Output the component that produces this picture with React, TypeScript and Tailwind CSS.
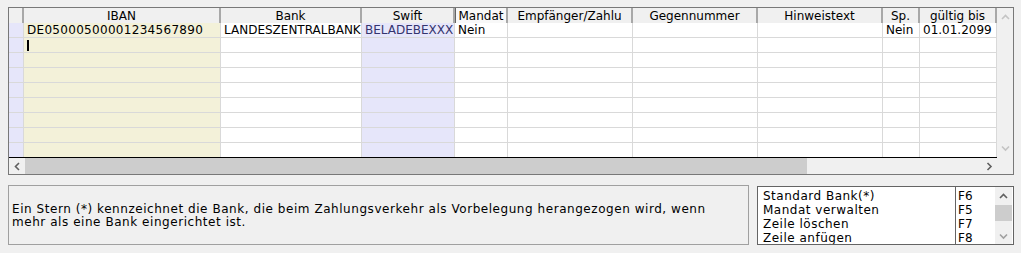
import React from 'react';

const cols = [
  { key: 'ind', label: '', w: 'w-[15px]', body: 'bg-[#e6e6fa]' },
  { key: 'iban', label: 'IBAN', w: 'w-[197px]', body: 'bg-[#f3f1d9]' },
  { key: 'bank', label: 'Bank', w: 'w-[141px]', body: 'bg-white' },
  { key: 'swift', label: 'Swift', w: 'w-[93px]', body: 'bg-[#e6e6fa]' },
  { key: 'mandat', label: 'Mandat', w: 'w-[53px]', body: 'bg-white' },
  { key: 'empf', label: 'Empfänger/Zahlu', w: 'w-[125px]', body: 'bg-white' },
  { key: 'gegen', label: 'Gegennummer', w: 'w-[125px]', body: 'bg-white' },
  { key: 'hinweis', label: 'Hinweistext', w: 'w-[125px]', body: 'bg-white' },
  { key: 'sp', label: 'Sp.', w: 'w-[37px]', body: 'bg-white' },
  { key: 'gueltig', label: 'gültig bis', w: 'w-[77px]', body: 'bg-white' },
];

const firstRow: Record<string, string> = {
  iban: 'DE05000500001234567890',
  bank: 'LANDESZENTRALBANK',
  swift: 'BELADEBEXXX',
  mandat: 'Nein',
  sp: 'Nein',
  gueltig: '01.01.2099',
};

const menu = [
  ['Standard Bank(*)', 'F6'],
  ['Mandat verwalten', 'F5'],
  ['Zeile löschen', 'F7'],
  ['Zeile anfügen', 'F8'],
];

function Chevron({ dir, color }: { dir: 'up' | 'down' | 'left' | 'right'; color: string }) {
  const d = {
    up: 'M1 5 L4.5 1.5 L8 5',
    down: 'M1 1.5 L4.5 5 L8 1.5',
    left: 'M5 1 L1.5 4.5 L5 8',
    right: 'M1.5 1 L5 4.5 L1.5 8',
  }[dir];
  const vertical = dir === 'up' || dir === 'down';
  return (
    <svg width={vertical ? 9 : 7} height={vertical ? 7 : 9} viewBox={vertical ? '0 0 9 7' : '0 0 7 9'}>
      <path d={d} fill="none" stroke={color} strokeWidth="1.6" />
    </svg>
  );
}

export default function App() {
  const rows = Array.from({ length: 9 }, (_, i) => i);
  return (
    <div
      className="w-[1021px] h-[253px] bg-[#f0f0f0] pt-[7px] pl-[8px] text-black overflow-hidden"
      style={{ fontFamily: '"DejaVu Sans", Verdana, sans-serif' }}
    >
      {/* grid */}
      <div className="w-[1006px] border border-[#787878] flex flex-col">
        <div className="flex">
          <div className="w-[988px] flex flex-col">
            <div className="flex h-[15px] bg-[#f0f0f0]">
              {cols.map((c) => (
                <div
                  key={c.key}
                  className={`${c.w} shrink-0 h-[15px] flex items-center justify-center text-[12px] leading-none border-r-2 border-[#a8a8a8] ${
                    c.key === 'mandat' ? 'border-l border-l-[#646464] bg-[#f8f8f8]' : ''
                  }`}
                >
                  {c.label}
                </div>
              ))}
            </div>
            {rows.map((r) => (
              <div
                key={r}
                className={`flex h-[15px] border-b ${r === 8 ? 'border-black' : 'border-[#d9d9d9]'}`}
              >
                {cols.map((c) => (
                  <div
                    key={c.key}
                    className={`${c.w} shrink-0 h-[14px] ${c.body} border-r border-[#d9d9d9] flex items-center pl-[3px] text-[12px] leading-none whitespace-nowrap overflow-hidden ${
                      c.key === 'swift' ? 'text-[#34346e]' : ''
                    } ${c.key === 'iban' ? 'tracking-[0.3px]' : ''}`}
                  >
                    {r === 0 ? firstRow[c.key] ?? '' : ''}
                    {r === 1 && c.key === 'iban' ? <span className="w-[2px] h-[11px] bg-black" /> : null}
                  </div>
                ))}
              </div>
            ))}
          </div>
          <div className="w-[16px] flex flex-col items-center justify-between py-[6px] bg-[#f0f0f0]">
            <Chevron dir="up" color="#c4c4c4" />
            <Chevron dir="down" color="#c4c4c4" />
          </div>
        </div>
        <div className="flex h-[16px]">
          <div className="w-[16px] flex items-center justify-center bg-[#f0f0f0]">
            <Chevron dir="left" color="#606060" />
          </div>
          <div className="w-[782px] bg-[#cdcdcd]" />
          <div className="w-[174px] bg-[#f0f0f0]" />
          <div className="w-[16px] flex items-center justify-center bg-[#f0f0f0]">
            <Chevron dir="right" color="#606060" />
          </div>
          <div className="w-[16px] bg-[#f0f0f0]" />
        </div>
      </div>

      {/* bottom */}
      <div className="flex mt-[10px]">
        <div className="w-[741px] h-[60px] border border-[#a0a0a0] flex items-center pl-[3px] pt-[1px] text-[12px] leading-[13px] tracking-[0.55px]">
          <p>
            Ein Stern (*) kennzeichnet die Bank, die beim Zahlungsverkehr als Vorbelegung herangezogen wird, wenn
            <br />
            mehr als eine Bank eingerichtet ist.
          </p>
        </div>
        <div className="ml-[8px] mt-[1px] w-[257px] h-[59px] border border-[#646464] bg-white flex overflow-hidden">
          <div className="w-[198px] border-r border-[#646464] flex flex-col pt-[2px]">
            {menu.map(([label]) => (
              <div key={label} className="h-[14px] pl-[5px] text-[12px] leading-[14px] tracking-[0.5px] whitespace-nowrap">
                {label}
              </div>
            ))}
          </div>
          <div className="w-[39px] flex flex-col pt-[2px]">
            {menu.map(([label, key]) => (
              <div key={label} className="h-[14px] pl-[2px] text-[12px] leading-[14px]">
                {key}
              </div>
            ))}
          </div>
          <div className="w-[17px] bg-[#f0f0f0] flex flex-col items-center">
            <div className="h-[18px] flex items-center">
              <Chevron dir="up" color="#606060" />
            </div>
            <div className="w-full h-[16px] bg-[#cdcdcd]" />
            <div className="flex-1 flex items-end pb-[4px]">
              <Chevron dir="down" color="#a0a0a0" />
            </div>
          </div>
        </div>
      </div>
    </div>
  );
}
